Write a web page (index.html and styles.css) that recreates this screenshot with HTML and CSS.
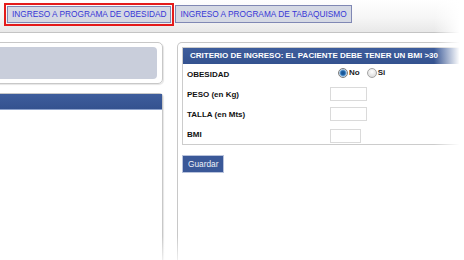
FILE: index.html
```html
<!DOCTYPE html>
<html lang="es">
<head>
<meta charset="utf-8">
<title>Ingreso a programa</title>
<link rel="stylesheet" href="styles.css">
</head>
<body>
<div class="topbar">
  <div class="tab-active"><button class="tab">INGRESO A PROGRAMA DE OBESIDAD</button></div>
  <button class="tab tab-second">INGRESO A PROGRAMA DE TABAQUISMO</button>
</div>
<div class="main">
  <div class="left">
    <div class="panel panel-top"><div class="graybox"></div></div>
    <div class="panel panel-list"><div class="bluebar"></div></div>
  </div>
  <div class="right">
    <div class="panel panel-form">
      <div class="criteria">
        <div class="bluebar title">CRITERIO DE INGRESO: EL PACIENTE DEBE TENER UN BMI &gt;30</div>
        <div class="rows">
          <div class="label">OBESIDAD</div>
          <div class="radios">
            <label class="opt"><input class="radio" type="radio" name="obe" checked>No</label>
            <label class="opt"><input class="radio" type="radio" name="obe">Si</label>
          </div>
          <div class="label">PESO (en Kg)</div>
          <div><input class="field" type="text"></div>
          <div class="label">TALLA (en Mts)</div>
          <div><input class="field" type="text"></div>
          <div class="label">BMI</div>
          <div><input class="field field-short" type="text"></div>
        </div>
      </div>
      <button class="save">Guardar</button>
    </div>
  </div>
</div>
<div class="fade-right"></div>
<div class="fade-bottom"></div>
</body>
</html>
```
FILE: styles.css
```css
html, body {
  margin: 0;
  padding: 0;
}
body {
  width: 464px;
  height: 260px;
  overflow: hidden;
  position: relative;
  background: #fff;
  font-family: "Liberation Sans", Arial, sans-serif;
}
.topbar {
  height: 33px;
  box-sizing: border-box;
  border-bottom: 1px solid #c4c4c4;
  background: linear-gradient(#ffffff 0%, #f6f6f6 55%, #e8e8e8 100%);
  display: flex;
  align-items: flex-start;
  padding: 3px 0 0 4px;
  gap: 1px;
}
.tab-active {
  border: 2px solid #e41b1b;
  padding: 1px;
  display: flex;
}
.tab {
  font-family: "Liberation Sans", Arial, sans-serif;
  font-size: 8.3px;
  color: #3737d6;
  background: #d5d9e4;
  border: 1px solid #8088b4;
  height: 17px;
  line-height: 15px;
  padding: 0 4px;
  margin: 0;
}
.tab-second {
  margin-top: 2px;
  height: 18px;
}
.main {
  display: flex;
  align-items: flex-start;
}
.left {
  width: 173px;
  margin-left: -10px;
  flex: none;
}
.panel {
  border: 1px solid #c8c8c8;
  border-radius: 5px;
  box-shadow: 1px 1px 1px #e6e6e6;
}
.panel-top {
  margin-top: 9px;
  padding: 4px 5px;
}
.graybox {
  height: 32px;
  background: #c9cedb;
  border-radius: 4px;
}
.panel-list {
  margin-top: 9px;
  height: 167px;
  box-sizing: border-box;
  border-bottom: none;
  border-radius: 4px 4px 0 0;
}
.bluebar {
  height: 16px;
  background: linear-gradient(#3e5d9c, #34528f);
  border-bottom: 1px solid #8ea3cc;
  box-sizing: border-box;
}
.right {
  flex: 1;
  margin-left: 14px;
  margin-right: -20px;
}
.panel-form {
  margin-top: 9px;
  padding: 4px;
  height: 218px;
  box-sizing: border-box;
  border-bottom: none;
  border-radius: 5px 5px 0 0;
}
.criteria {
  border: 1px solid #cccccc;
}
.title {
  border-bottom: none;
  color: #fff;
  font-weight: bold;
  font-size: 8px;
  line-height: 16px;
  padding-left: 7px;
}
.rows {
  display: grid;
  grid-template-columns: 143px auto;
  grid-auto-rows: 20px;
  align-items: center;
  padding-left: 4px;
}
.label {
  font-size: 8px;
  font-weight: bold;
  color: #111;
  padding-top: 1px;
}
.radios {
  display: flex;
  align-items: center;
  padding-left: 8px;
  margin-top: -3px;
  gap: 7px;
}
.opt {
  display: flex;
  align-items: center;
  font-size: 8px;
  font-weight: bold;
  color: #222;
}
.radio {
  appearance: none;
  -webkit-appearance: none;
  width: 10px;
  height: 10px;
  border-radius: 50%;
  margin: 0 1px 0 0;
  border: 1px solid #a5a5a5;
  background: radial-gradient(circle at 50% 35%, #ffffff, #d2d2d2);
  box-sizing: border-box;
}
.radio:checked {
  border-color: #7d7d7d;
  background: radial-gradient(circle, #174f8c 0, #1f63a8 2px, #6fa6d6 3px, #dfe6ee 4px);
}
.field {
  display: block;
  width: 37px;
  height: 14px;
  box-sizing: border-box;
  border: 1px solid #dadada;
  margin: 0;
  padding: 0;
  background: #fff;
}
.field-short {
  width: 31px;
  margin-top: 3px;
}
.save {
  margin-top: 10px;
  height: 18px;
  padding: 0 5px;
  font-family: "Liberation Sans", Arial, sans-serif;
  font-size: 8.3px;
  color: #eef1f8;
  background: #3a5898;
  border: 1px solid #b9c3dc;
}
.fade-right {
  position: absolute;
  top: 0;
  right: 0;
  width: 30px;
  height: 100%;
  background: linear-gradient(to right, rgba(255,255,255,0), #fff 85%);
  pointer-events: none;
}
.fade-bottom {
  position: absolute;
  left: 0;
  right: 0;
  bottom: 0;
  height: 24px;
  background: linear-gradient(to bottom, rgba(255,255,255,0), rgba(255,255,255,0.7));
  pointer-events: none;
}
```
